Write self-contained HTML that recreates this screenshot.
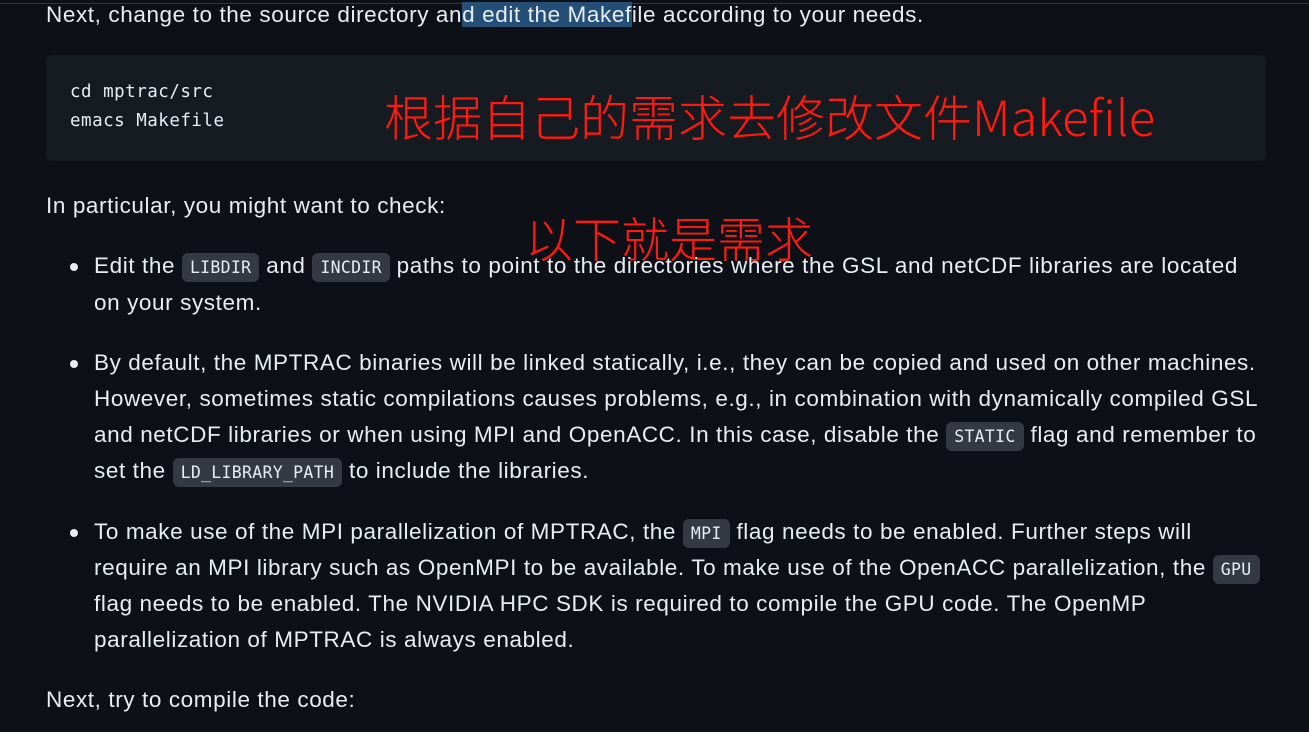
<!DOCTYPE html>
<html><head><meta charset="utf-8"><style>
html,body{margin:0;padding:0;background:#0d1117;width:1309px;height:732px;overflow:hidden;position:relative;font-family:"Liberation Sans","Noto Sans CJK SC",sans-serif;color:#e6edf3}
.l{position:absolute;white-space:nowrap;font-size:22.5px;letter-spacing:0.6px;line-height:36px;left:94px}
.topline{position:absolute;left:0;top:3px;width:1309px;height:1px;background:#30363d}
.code{position:absolute;left:46px;top:55px;width:1220px;height:106px;background:#161b22;border-radius:6px}
.mono{font-family:"DejaVu Sans Mono","Liberation Mono",monospace}
.pre{position:absolute;left:70px;font-size:17.5px;color:#e6edf3;letter-spacing:0.5px}
c{font-family:"DejaVu Sans Mono","Liberation Mono",monospace;font-size:16.5px;letter-spacing:0.3px;background:#343942;border-radius:6px;padding:5px 8px}
.dot{position:absolute;left:70px;width:8px;height:8px;border-radius:50%;background:#e6edf3}
.red{position:absolute;color:#ff1a0f;font-family:"Noto Sans CJK SC",sans-serif;white-space:nowrap;font-weight:300}
.sel{background:#264f78}
</style></head><body>
<div class="topline"></div>
<div class="l" style="left:46px;top:-3px">Next, change to the source directory an<span class="sel">d edit the Makef</span>ile according to your needs.</div>
<div class="code"></div>
<div class="pre mono" style="top:82px">cd mptrac/src</div>
<div class="pre mono" style="top:111px">emacs Makefile</div>
<div class="red" style="left:384px;top:84px;font-size:49px;line-height:64px">根据自己的需求去修改文件Makefile</div>
<div class="l" style="left:46px;top:188px">In particular, you might want to check:</div>
<div class="red" style="left:525px;top:204px;font-size:48px;line-height:64px">以下就是需求</div>
<div class="dot" style="top:263px"></div>
<div class="l" style="top:248px">Edit the <c>LIBDIR</c> and <c>INCDIR</c> paths to point to the directories where the GSL and netCDF libraries are located</div>
<div class="l" style="top:285px">on your system.</div>
<div class="dot" style="top:360px"></div>
<div class="l" style="top:345px">By default, the MPTRAC binaries will be linked statically, i.e., they can be copied and used on other machines.</div>
<div class="l" style="top:381px">However, sometimes static compilations causes problems, e.g., in combination with dynamically compiled GSL</div>
<div class="l" style="top:417px">and netCDF libraries or when using MPI and OpenACC. In this case, disable the <c>STATIC</c> flag and remember to</div>
<div class="l" style="top:453px">set the <c>LD_LIBRARY_PATH</c> to include the libraries.</div>
<div class="dot" style="top:529px"></div>
<div class="l" style="top:514px">To make use of the MPI parallelization of MPTRAC, the <c>MPI</c> flag needs to be enabled. Further steps will</div>
<div class="l" style="top:550px">require an MPI library such as OpenMPI to be available. To make use of the OpenACC parallelization, the <c>GPU</c></div>
<div class="l" style="top:586px">flag needs to be enabled. The NVIDIA HPC SDK is required to compile the GPU code. The OpenMP</div>
<div class="l" style="top:622px">parallelization of MPTRAC is always enabled.</div>
<div class="l" style="left:46px;top:682px">Next, try to compile the code:</div>
</body></html>
